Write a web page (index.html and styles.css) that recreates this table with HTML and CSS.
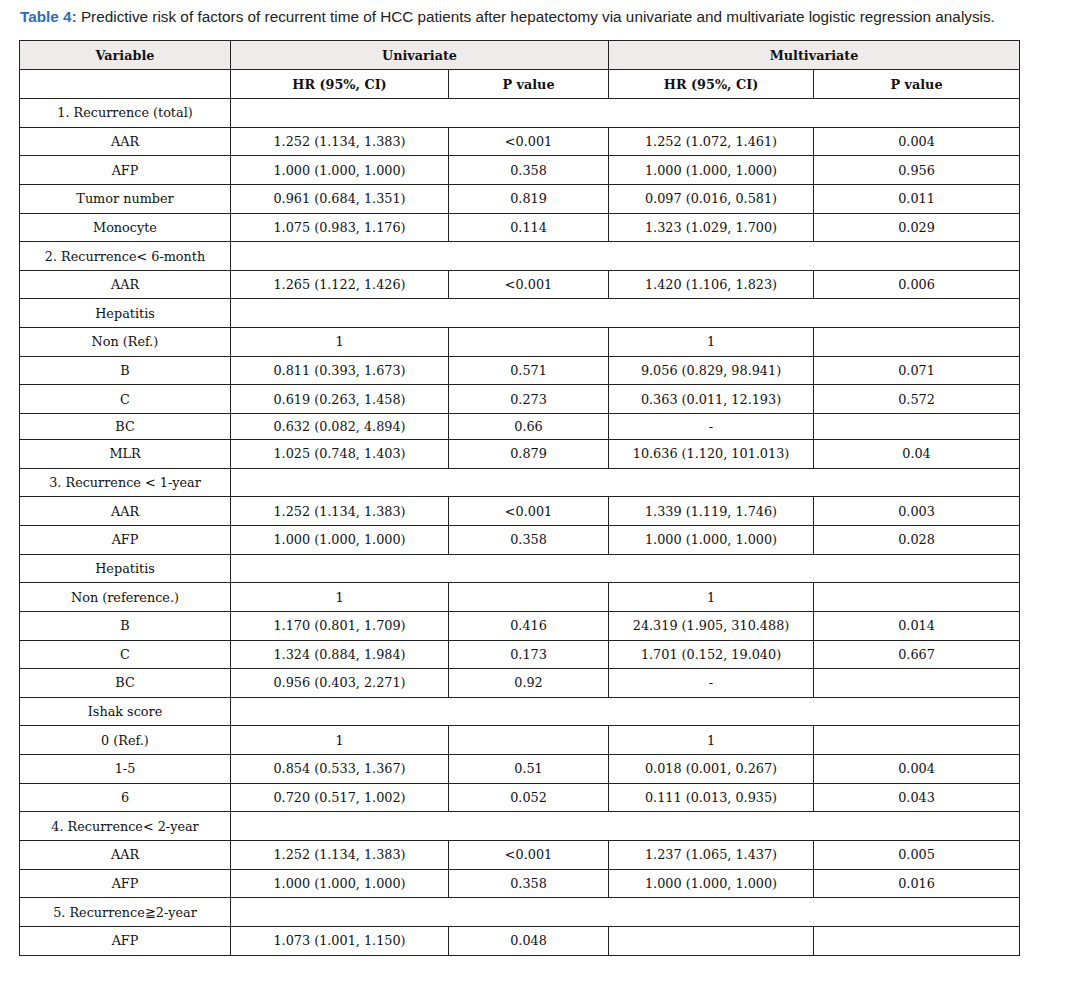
FILE: index.html
```html
<!DOCTYPE html>
<html>
<head>
<meta charset="utf-8">
<link rel="stylesheet" href="styles.css">
</head>
<body>
<div class="page">
<p class="caption"><span class="label">Table 4:</span> Predictive risk of factors of recurrent time of HCC patients after hepatectomy via univariate and multivariate logistic regression analysis.</p>
<table class="data">
<colgroup>
<col class="c1"><col class="c2"><col class="c3"><col class="c4"><col class="c5">
</colgroup>
<thead>
<tr class="head"><th>Variable</th><th colspan="2">Univariate</th><th colspan="2">Multivariate</th></tr>
<tr class="sub"><th></th><th>HR (95%, CI)</th><th>P value</th><th>HR (95%, CI)</th><th>P value</th></tr>
</thead>
<tbody>
<tr><td>1. Recurrence (total)</td><td colspan="4"></td></tr>
<tr><td>AAR</td><td>1.252 (1.134, 1.383)</td><td>&lt;0.001</td><td>1.252 (1.072, 1.461)</td><td>0.004</td></tr>
<tr><td>AFP</td><td>1.000 (1.000, 1.000)</td><td>0.358</td><td>1.000 (1.000, 1.000)</td><td>0.956</td></tr>
<tr><td>Tumor number</td><td>0.961 (0.684, 1.351)</td><td>0.819</td><td>0.097 (0.016, 0.581)</td><td>0.011</td></tr>
<tr><td>Monocyte</td><td>1.075 (0.983, 1.176)</td><td>0.114</td><td>1.323 (1.029, 1.700)</td><td>0.029</td></tr>
<tr><td>2. Recurrence&lt; 6-month</td><td colspan="4"></td></tr>
<tr><td>AAR</td><td>1.265 (1.122, 1.426)</td><td>&lt;0.001</td><td>1.420 (1.106, 1.823)</td><td>0.006</td></tr>
<tr><td>Hepatitis</td><td colspan="4"></td></tr>
<tr><td>Non (Ref.)</td><td>1</td><td></td><td>1</td><td></td></tr>
<tr><td>B</td><td>0.811 (0.393, 1.673)</td><td>0.571</td><td>9.056 (0.829, 98.941)</td><td>0.071</td></tr>
<tr><td>C</td><td>0.619 (0.263, 1.458)</td><td>0.273</td><td>0.363 (0.011, 12.193)</td><td>0.572</td></tr>
<tr class="short"><td>BC</td><td>0.632 (0.082, 4.894)</td><td>0.66</td><td>-</td><td></td></tr>
<tr><td>MLR</td><td>1.025 (0.748, 1.403)</td><td>0.879</td><td>10.636 (1.120, 101.013)</td><td>0.04</td></tr>
<tr><td>3. Recurrence &lt; 1-year</td><td colspan="4"></td></tr>
<tr><td>AAR</td><td>1.252 (1.134, 1.383)</td><td>&lt;0.001</td><td>1.339 (1.119, 1.746)</td><td>0.003</td></tr>
<tr><td>AFP</td><td>1.000 (1.000, 1.000)</td><td>0.358</td><td>1.000 (1.000, 1.000)</td><td>0.028</td></tr>
<tr><td>Hepatitis</td><td colspan="4"></td></tr>
<tr><td>Non (reference.)</td><td>1</td><td></td><td>1</td><td></td></tr>
<tr><td>B</td><td>1.170 (0.801, 1.709)</td><td>0.416</td><td>24.319 (1.905, 310.488)</td><td>0.014</td></tr>
<tr><td>C</td><td>1.324 (0.884, 1.984)</td><td>0.173</td><td>1.701 (0.152, 19.040)</td><td>0.667</td></tr>
<tr><td>BC</td><td>0.956 (0.403, 2.271)</td><td>0.92</td><td>-</td><td></td></tr>
<tr><td>Ishak score</td><td colspan="4"></td></tr>
<tr><td>0 (Ref.)</td><td>1</td><td></td><td>1</td><td></td></tr>
<tr><td>1-5</td><td>0.854 (0.533, 1.367)</td><td>0.51</td><td>0.018 (0.001, 0.267)</td><td>0.004</td></tr>
<tr><td>6</td><td>0.720 (0.517, 1.002)</td><td>0.052</td><td>0.111 (0.013, 0.935)</td><td>0.043</td></tr>
<tr><td>4. Recurrence&lt; 2-year</td><td colspan="4"></td></tr>
<tr><td>AAR</td><td>1.252 (1.134, 1.383)</td><td>&lt;0.001</td><td>1.237 (1.065, 1.437)</td><td>0.005</td></tr>
<tr><td>AFP</td><td>1.000 (1.000, 1.000)</td><td>0.358</td><td>1.000 (1.000, 1.000)</td><td>0.016</td></tr>
<tr><td>5. Recurrence≧2-year</td><td colspan="4"></td></tr>
<tr><td>AFP</td><td>1.073 (1.001, 1.150)</td><td>0.048</td><td></td><td></td></tr>
</tbody>
</table>
</div>
</body>
</html>
```
FILE: styles.css
```css
html, body {
  margin: 0;
  padding: 0;
  background: #ffffff;
}
.page {
  padding: 5px 0 0 19px;
}
.caption {
  margin: 0 0 0 1px;
  font-family: "Liberation Sans", Arial, sans-serif;
  font-size: 15.3px;
  line-height: 23px;
  color: #222222;
}
.caption .label {
  color: #2a6ebb;
  font-weight: bold;
}
.data {
  margin-top: 12px;
  border-collapse: collapse;
  table-layout: fixed;
  width: 1000px;
  font-family: "DejaVu Serif", serif;
  font-size: 12.8px;
  color: #111111;
}
.c1 { width: 211px; }
.c2 { width: 218px; }
.c3 { width: 160px; }
.c4 { width: 205px; }
.c5 { width: 206px; }
.data th, .data td {
  border: 1px solid #222222;
  text-align: center;
  padding: 0 4px;
  height: 27.65px;
  white-space: nowrap;
}
.data th {
  font-weight: bold;
  height: 28px;
}
.data tr.head th {
  background: #efebea;
}
.data tr.short td {
  height: 25px;
}
```
